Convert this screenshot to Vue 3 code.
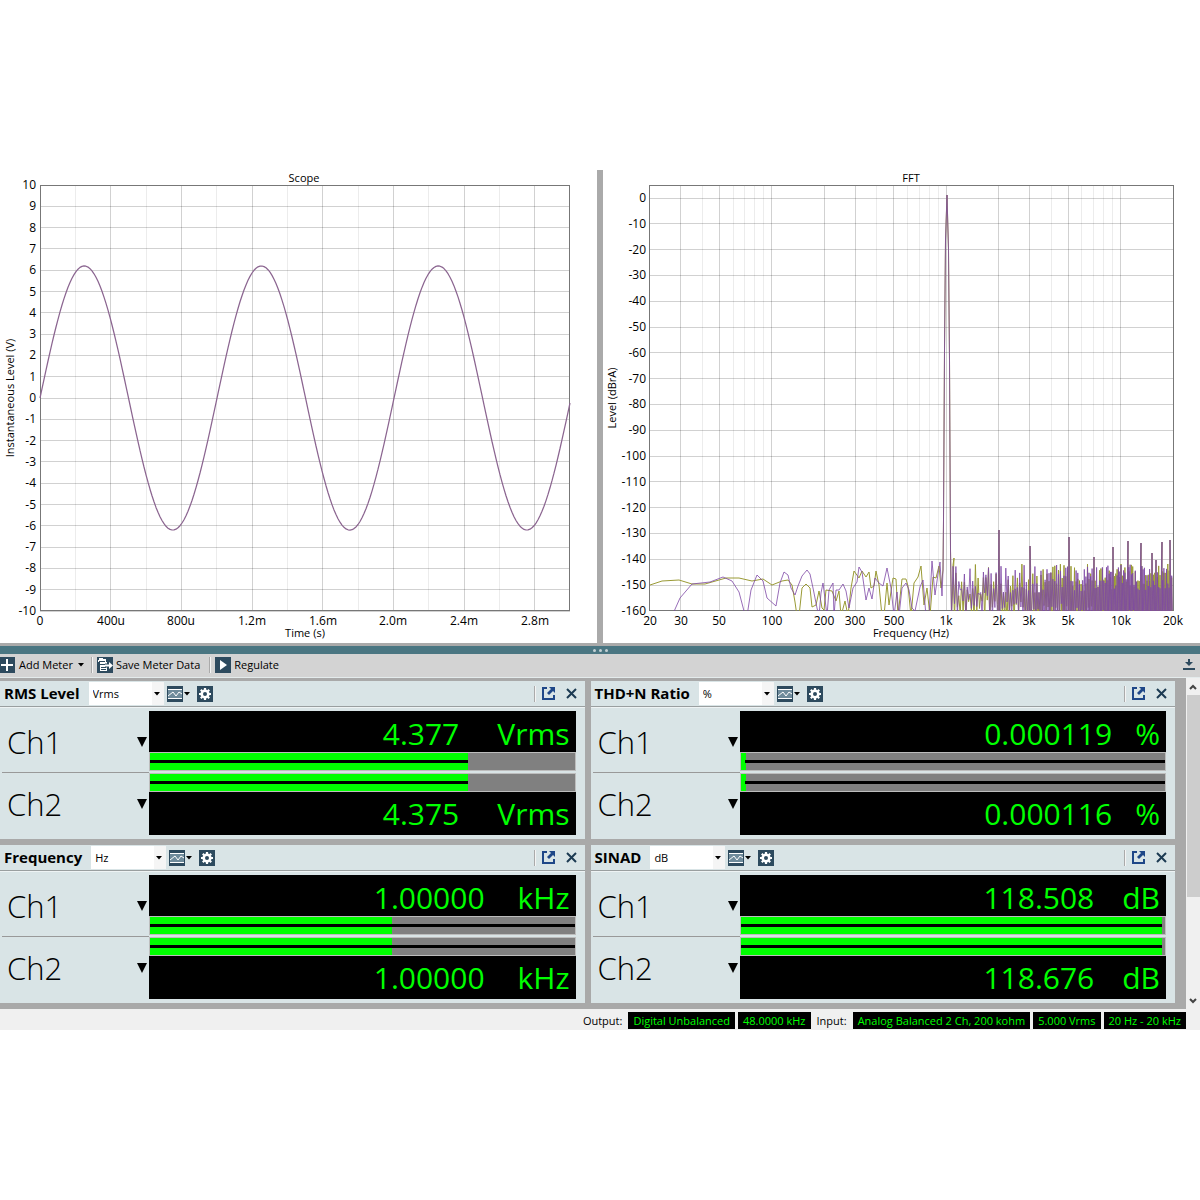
<script setup>
const X0 = 40, X1 = 570, Y0 = 15, Y1 = 441
const xMs = (ms) => X0 + (ms / 3) * (X1 - X0)
const yV = (v) => 228 - v * 21.3
const snap = (n) => Math.floor(n) + 0.5

const scopeY = Array.from({ length: 21 }, (_, i) => 10 - i)
const scopeX = Array.from({ length: 14 }, (_, i) => ({ ms: (i + 1) * 0.2, major: i % 2 === 1 }))
const scopeXLabels = [[0, '0'], [0.4, '400u'], [0.8, '800u'], [1.2, '1.2m'], [1.6, '1.6m'], [2, '2.0m'], [2.4, '2.4m'], [2.8, '2.8m']]
const sine = Array.from({ length: 266 }, (_, i) => {
  const ms = (i / 265) * 3
  return `${xMs(ms).toFixed(1)},${yV(6.2 * Math.sin((2 * Math.PI * ms) / 1.002)).toFixed(1)}`
}).join(' ')

const F0 = 48, F1 = 571
const xHz = (f) => F0 + (Math.log10(f / 20) / 3) * (F1 - F0)
const yDb = (d) => 28 - d * 2.58
const fftY = Array.from({ length: 17 }, (_, i) => -i * 10)
const majors = [30, 50, 100, 200, 300, 500, 1000, 2000, 3000, 5000, 10000]
const minors = [40, 60, 70, 80, 90, 400, 600, 700, 800, 900, 4000, 6000, 7000, 8000, 9000]
const fftXLabels = [[20, '20'], [30, '30'], [50, '50'], [100, '100'], [200, '200'], [300, '300'], [500, '500'], [1000, '1k'], [2000, '2k'], [3000, '3k'], [5000, '5k'], [10000, '10k'], [20000, '20k']]

const olivePoints = [[48, 415], [60, 411], [77, 410], [90, 414], [103, 414], [124, 408], [137, 408], [150, 411], [161, 409], [170, 415], [180, 411], [186, 410], [190, 415], [193, 432], [195, 446], [197, 446], [200, 418], [204, 414], [208, 418], [210, 437], [214, 435], [217, 421], [220, 438], [222, 440], [224, 420], [230, 421], [234, 431], [237, 421], [239, 446], [243, 431], [246, 446], [249, 418], [252, 401], [257, 408], [260, 401], [264, 407], [267, 402], [269, 418], [272, 416], [274, 401], [277, 415], [280, 446], [282, 446], [285, 413], [287, 435], [291, 408], [294, 409], [296, 446], [300, 409], [304, 409], [306, 416], [309, 446], [312, 413], [316, 407], [319, 396], [322, 435], [325, 418], [328, 446], [331, 407], [334, 408], [337, 396], [339, 418]]
const violetPoints = [[70, 446], [78, 428], [90, 414], [108, 412], [121, 407], [130, 411], [137, 422], [142, 441], [144, 446], [145, 446], [149, 420], [155, 405], [161, 411], [165, 428], [174, 436], [178, 413], [182, 402], [186, 405], [189, 418], [193, 425], [196, 416], [200, 406], [205, 400], [208, 404], [211, 418], [215, 438], [217, 446], [219, 423], [221, 413], [223, 429], [225, 446], [227, 420], [231, 413], [232, 446], [234, 420], [237, 420], [241, 414], [244, 421], [247, 438], [251, 418], [255, 412], [257, 397], [260, 402], [264, 430], [267, 418], [270, 429], [273, 408], [277, 413], [281, 416], [285, 398], [289, 418], [292, 446], [295, 422], [297, 446], [300, 418], [304, 413], [307, 420], [310, 438], [313, 441], [318, 417], [321, 410], [324, 446], [327, 446], [330, 391], [333, 425], [336, 404], [338, 392], [340, 426]]

const spikes = [[397, 360], [428, 376], [467, 367], [492, 387], [511, 377], [526, 371], [539, 373], [550, 383], [554, 390], [560, 372], [568, 370]]
function noise(seed) {
  let s = seed
  const rnd = () => ((s = (s * 16807) % 2147483647) / 2147483647)
  const pts = []
  let x = 351
  while (x < F1) {
    const t = Math.min(1, (x - 351) / 160)
    pts.push([x, 394 + rnd() * (32 - 6 * t)])
    x += 1.5 - 0.8 * t
    pts.push([Math.min(x, F1), 419 + rnd() * 30 + 20 * t])
    x += 1.4 - 0.8 * t
  }
  for (const [sx, sy] of spikes) pts.push([sx - 0.8, 446], [sx, sy], [sx + 0.8, 446])
  return pts.sort((a, b) => a[0] - b[0])
}
const join = (pts) => pts.map((p) => `${p[0].toFixed(1)},${p[1].toFixed(1)}`).join(' ')
const peak = [[341, 400], [341.5, 350], [342.5, 180], [343.5, 70], [345, 25], [346.5, 80], [347.5, 190], [348.5, 380], [349.5, 446]]
const olive = join([...olivePoints, ...peak, [352, 388], ...noise(4242)])
const violet = join([...violetPoints, ...peak, ...noise(9157)])

const meters = [
  { title: 'RMS Level', unit: 'Vrms', values: ['4.377', '4.375'], fill: 75, lineFrom: 0, lineTo: 75 },
  { title: 'THD+N Ratio', unit: '%', values: ['0.000119', '0.000116'], fill: 1.3, lineFrom: 1, lineTo: 100 },
  { title: 'Frequency', unit: 'Hz', shown: 'kHz', values: ['1.00000', '1.00000'], fill: 57, lineFrom: 0, lineTo: 100 },
  { title: 'SINAD', unit: 'dB', values: ['118.508', '118.676'], fill: 99.2, lineFrom: 0, lineTo: 99.2 },
]
const gapFor = (m) => `${18 + 5 * (m.shown || m.unit).length}px`
</script>

<template>
  <main class="app">
    <section class="charts">
      <svg class="chart" viewBox="0 0 597 473" role="img" aria-label="Scope">
        <text class="label mid" x="304" y="12">Scope</text>
        <g class="minor">
          <line v-for="g in scopeX.filter((g) => !g.major)" :key="g.ms" :x1="snap(xMs(g.ms))" :x2="snap(xMs(g.ms))" :y1="Y0" :y2="Y1" />
        </g>
        <g class="major">
          <line v-for="g in scopeX.filter((g) => g.major)" :key="g.ms" :x1="snap(xMs(g.ms))" :x2="snap(xMs(g.ms))" :y1="Y0" :y2="Y1" />
          <line v-for="v in scopeY" :key="v" :x1="X0" :x2="X1" :y1="snap(yV(v))" :y2="snap(yV(v))" />
        </g>
        <rect class="frame" x="40.5" y="15.5" width="529" height="425" />
        <text v-for="v in scopeY" :key="'l' + v" class="label end" x="36" :y="Math.round(yV(v)) + 4">{{ v }}</text>
        <text v-for="l in scopeXLabels" :key="l[1]" class="label tick" :x="Math.round(xMs(l[0]))" y="455">{{ l[1] }}</text>
        <text class="label mid" x="305" y="467">Time (s)</text>
        <text class="label mid" transform="translate(14 228) rotate(-90)">Instantaneous Level (V)</text>
        <polyline class="sine" :points="sine" />
      </svg>
      <svg class="chart" viewBox="1 0 597 473" role="img" aria-label="FFT">
        <defs><clipPath id="plot"><rect x="48" y="15" width="524" height="426" /></clipPath></defs>
        <text class="label mid" x="309" y="12">FFT</text>
        <g class="minor">
          <line v-for="f in minors" :key="f" :x1="snap(xHz(f))" :x2="snap(xHz(f))" :y1="Y0" :y2="Y1" />
        </g>
        <g class="major">
          <line v-for="f in majors" :key="f" :x1="snap(xHz(f))" :x2="snap(xHz(f))" :y1="Y0" :y2="Y1" />
          <line v-for="d in fftY" :key="d" :x1="F0" :x2="F1" :y1="snap(yDb(d))" :y2="snap(yDb(d))" />
        </g>
        <rect class="frame" x="47.5" y="15.5" width="524" height="425" />
        <text v-for="d in fftY" :key="'l' + d" class="label end" x="44" :y="Math.round(yDb(d)) + 4">{{ d }}</text>
        <text v-for="l in fftXLabels" :key="l[1]" class="label tick" :x="Math.round(xHz(l[0]))" y="455">{{ l[1] }}</text>
        <text class="label mid" x="309" y="467">Frequency (Hz)</text>
        <text class="label mid" transform="translate(14 228) rotate(-90)">Level (dBrA)</text>
        <g clip-path="url(#plot)">
          <polyline class="olive" :points="olive" />
          <polyline class="violet" :points="violet" />
        </g>
      </svg>
    </section>

    <div class="splitter"><i></i><i></i><i></i></div>

    <nav class="toolbar">
      <button type="button">
        <svg width="16" height="16" viewBox="0 0 16 16"><path fill="#2d4a5e" d="M0 0h15v16H0z" /><path stroke="#fff" stroke-width="2" d="M1 8h12M7 2v12" /></svg>
        <span>Add Meter</span>
        <svg class="tri" width="6" height="4" viewBox="0 0 6 4"><path d="M0 0h6L3 3.500z" /></svg>
      </button>
      <span class="sep"></span>
      <button type="button">
        <svg width="16" height="16" viewBox="0 0 16 16">
          <path fill="#2d4a5e" d="M0 0h16v16H0z" />
          <path fill="#fff" d="M2 1h4v1h3v3h1v9H3V5H1V3h1z" />
          <path stroke="#2d4a5e" d="M2 4.500h6M3 7.500h5M4 10.500h5M4 12.500h5" />
          <path stroke="#2d4a5e" stroke-width="4" d="M8 8.500h6" />
          <path fill="#fff" d="M8 7.500h4V5l4 3.500-4 3.500V9.500H8z" />
        </svg>
        <span>Save Meter Data</span>
      </button>
      <span class="sep"></span>
      <button type="button">
        <svg width="16" height="16" viewBox="0 0 16 16"><path fill="#2d4a5e" d="M0 0h16v16H0z" /><path fill="#fff" d="M5 3l7 5-7 5z" /></svg>
        <span>Regulate</span>
      </button>
      <button type="button" class="dock" aria-label="Dock">
        <svg width="14" height="12" viewBox="0 0 14 12"><path fill="#2d4a5e" d="M6 0h2v3h3L7 7 3 3h3zM1 9h12v2H1z" /></svg>
      </button>
    </nav>

    <section class="work">
      <div class="grid">
        <article v-for="m in meters" :key="m.title" class="meter">
          <header>
            <label :for="'u-' + m.title">{{ m.title }}</label>
            <span class="pick">
              <select :id="'u-' + m.title"><option>{{ m.unit }}</option></select>
              <svg class="tri" width="6" height="4" viewBox="0 0 6 4"><path d="M0 0h6L3 3.500z" /></svg>
            </span>
            <button type="button" class="graph" aria-label="Graph">
              <svg width="16" height="16" viewBox="0 0 16 16"><path fill="#2d4a5e" d="M0 0h16v16H0z" /><path fill="#6f8b9b" d="M1 4h14v8H1z" /><path fill="none" stroke="#fff" d="M1 3.500h14M1 12.500h14" /><path fill="none" stroke="#fff" d="M1 10l5-4 3 4 3-4 3 2" /></svg>
              <svg class="tri" width="6" height="4" viewBox="0 0 6 4"><path d="M0 0h6L3 3.500z" /></svg>
            </button>
            <button type="button" aria-label="Settings">
              <svg width="16" height="16" viewBox="0 0 16 16"><path fill="#2d4a5e" d="M0 0h16v16H0z" /><circle cx="8" cy="8" r="3.300" fill="none" stroke="#fff" stroke-width="2.600" /><path stroke="#fff" stroke-width="2.200" d="M8 2v2M8 12v2M2 8h2M12 8h2M3.800 3.800l1.400 1.400M10.800 10.800l1.400 1.400M3.800 12.200l1.400-1.400M10.800 5.200l1.400-1.400" /></svg>
            </button>
            <span class="sep push"></span>
            <button type="button" aria-label="Pop out">
              <svg width="13" height="13" viewBox="0 0 13 13"><path fill="none" stroke="#1f4788" stroke-width="2" d="M5 1H1v11h11V8" /><path fill="#1f4788" d="M7 0h6v6l-2-2-4 4-2-2 4-4z" /></svg>
            </button>
            <button type="button" aria-label="Close">
              <svg width="11" height="11" viewBox="0 0 11 11"><path stroke="#1c3a52" stroke-width="2" d="M1 1l9 9M10 1l-9 9" /></svg>
            </button>
          </header>
          <div class="body">
            <div class="channels">
              <div v-for="c in ['Ch1', 'Ch2']" :key="c" class="channel">
                <span>{{ c }}</span>
                <svg width="10" height="10" viewBox="0 0 10 10"><path d="M0 0h10L5 10z" /></svg>
              </div>
            </div>
            <div class="readouts">
              <div v-for="(v, i) in m.values" :key="i" class="readout">
                <p class="value" :style="{ columnGap: gapFor(m) }"><span>{{ v }}</span><span>{{ m.shown || m.unit }}</span></p>
                <div class="bar">
                  <div class="fill" :style="{ width: m.fill + '%' }"></div>
                  <div class="line" :style="{ left: m.lineFrom + '%', width: m.lineTo - m.lineFrom + '%' }"></div>
                </div>
              </div>
            </div>
          </div>
        </article>
      </div>
      <div class="scroll">
        <button type="button" aria-label="Scroll up"><svg width="8" height="6" viewBox="0 0 8 6"><path fill="none" stroke="#444" stroke-width="2" d="M1 5l3-3 3 3" /></svg></button>
        <div class="track"><div class="thumb"></div></div>
        <button type="button" aria-label="Scroll down"><svg width="8" height="6" viewBox="0 0 8 6"><path fill="none" stroke="#444" stroke-width="2" d="M1 1l3 3 3-3" /></svg></button>
      </div>
    </section>

    <footer class="status">
      <span class="name">Output:</span>
      <output>Digital Unbalanced</output>
      <output>48.0000 kHz</output>
      <span class="name">Input:</span>
      <output>Analog Balanced 2 Ch, 200 kohm</output>
      <output>5.000 Vrms</output>
      <output>20 Hz - 20 kHz</output>
    </footer>
  </main>
</template>

<style>
body { margin: 0; background: #fff; }
</style>

<style scoped>
.app { padding: 170px 0; font-family: "Open Sans", "Noto Sans", sans-serif; font-size: 11px; line-height: 16px; color: #000; }
button { display: flex; align-items: center; padding: 0; border: 0; background: none; font: inherit; color: inherit; }
svg { display: block; flex: none; }
.charts { display: grid; grid-template-columns: 1fr 1fr; column-gap: 6px; background: #aaa; border-bottom: 3px solid #aaa; }
.chart { width: 100%; height: auto; background: #fff; }
.label { font-size: 12px; fill: #000; }
.label.mid { text-anchor: middle; font-size: 11px; }
.label.tick { text-anchor: middle; }
.label.end { text-anchor: end; }
.minor line { stroke: #ececec; }
.major line { stroke: #000; stroke-opacity: 0.18; }
.frame { fill: none; stroke: #777; }
polyline { fill: none; stroke-width: 1; stroke-linejoin: bevel; }
.sine { stroke: #8b6590; stroke-width: 1.25; }
.olive { stroke: #9a9a35; }
.violet { stroke: #7e48a6; stroke-opacity: 0.8; }
.splitter { display: flex; justify-content: center; align-items: center; gap: 3px; height: 8px; background: #4a7682; }
.splitter i { width: 3px; height: 3px; border-radius: 50%; background: #c3d0d4; }
.toolbar { display: flex; align-items: center; height: 22px; padding-bottom: 1px; background: #d3d3d3; border-bottom: 1px solid #e4ebec; }
.toolbar button { gap: 3px; }
.toolbar .tri { margin-left: 2px; }
.toolbar .sep { margin: 0 4px 0 7px; }
.toolbar .sep + button + .sep { margin-left: 9px; }
.toolbar .dock { margin: 0 4px 0 auto; }
.sep { width: 1px; height: 16px; background: #aaa; border-right: 1px solid #f4f4f4; }
.work { display: flex; background: #a9a9a9; }
.grid { flex: 1; display: grid; grid-template-columns: 1fr 1fr; gap: 6px; padding: 3px 11px 6px 0; }
.meter { background: #d9e4e6; }
.meter header { display: flex; align-items: center; height: 25px; padding: 0 8px 0 4px; border-bottom: 1px solid #9a9fa0; }
.meter label { margin-right: 9px; font-size: 15px; font-weight: 700; line-height: 18px; padding-bottom: 2px; color: #000; }
.pick { position: relative; margin-right: 3px; }
.pick select { display: block; width: 75px; height: 23px; padding: 0 4px; border: 0; border-radius: 0; appearance: none; background: linear-gradient(90deg, #fff 63px, #f5f5f5 63px); font: inherit; color: #000; }
.pick .tri { position: absolute; right: 4px; top: 10px; }
.graph { gap: 1px; margin-right: 7px; }
.push { margin: 0 6px 0 auto; }
.push + button { margin-right: 11px; }
.body { display: grid; grid-template-columns: 149px 1fr; padding: 3px 9px 4px 0; border-top: 1px solid #eef3f4; }
.channels { display: grid; grid-template-rows: 1fr 1fr; padding-left: 2px; }
.channel { display: flex; align-items: center; justify-content: space-between; padding: 0 2px 0 5px; font-size: 31px; font-weight: 300; line-height: 40px; color: #000; }
.channel:first-child { border-bottom: 1px solid #999; }
.readouts { display: grid; row-gap: 2px; }
.readout { display: flex; flex-direction: column; background: #000; }
.readout:last-child { flex-direction: column-reverse; }
.value { display: flex; justify-content: flex-end; margin: 0; padding: 4px 6px 0 0; font-size: 30px; line-height: 37px; color: #00ff00; }
.readout:last-child .value { padding: 3px 6px 3px 0; }
.bar { position: relative; height: 17px; background: #808080; border: 1px solid #bdbdbd; }
.fill { height: 100%; background: #00ff00; }
.line { position: absolute; top: 7px; height: 3px; background: #000; }
.scroll { display: flex; flex-direction: column; width: 14px; background: #f0f0f0; }
.scroll button { justify-content: center; height: 17px; }
.track { flex: 1; }
.thumb { height: 68%; margin-left: 1px; background: #cdcdcd; }
.status { display: flex; justify-content: flex-end; align-items: center; gap: 3px; height: 19px; padding: 2px 14px 0 0; background: #f0f0f0; }
.status output { padding: 0 5px; line-height: 17px; background: #000; color: #00ff00; }
.name { margin: 0 3px; }
</style>
